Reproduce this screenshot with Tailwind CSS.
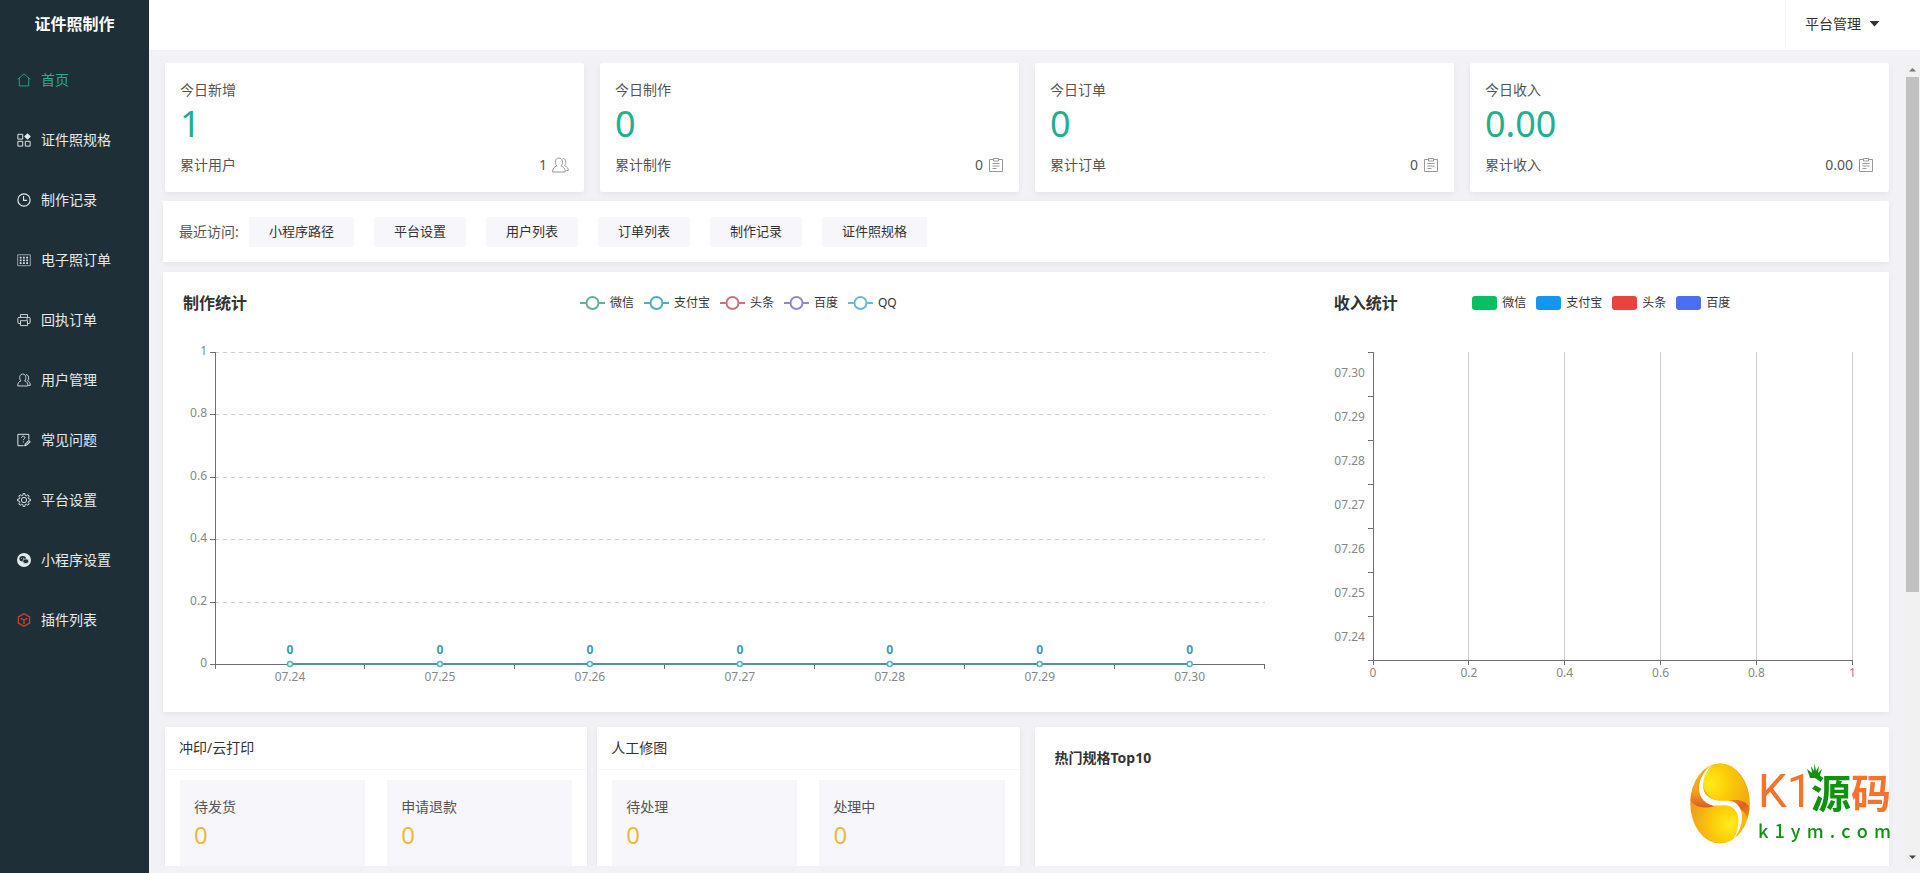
<!DOCTYPE html>
<html lang="zh-CN">
<head>
<meta charset="utf-8">
<title>证件照制作</title>
<script src="https://cdn.jsdelivr.net/npm/@tailwindcss/browser@4"></script>
</head>
<body class="flex h-screen overflow-hidden bg-[#f1f1f6] font-['Noto_Sans','Noto_Sans_CJK_SC',sans-serif] text-sm text-[#555]">

<aside class="w-[149px] shrink-0 bg-[#1f2f38] text-[#e4eaec]">
  <h1 class="flex h-12 items-center justify-center text-base font-bold text-white">证件照制作</h1>
  <nav class="flex flex-col pt-0.5">
    <a href="#" class="flex h-[60px] items-center gap-2.5 pl-[17px] text-[#1fb08e]">
      <svg class="size-[14px]" viewBox="0 0 16 16" fill="none" stroke="currentColor"><path d="M.7 7.2 8 1l7.3 6.2M2.6 5.8v9h10.8v-9"/></svg>首页</a>
    <a href="#" class="flex h-[60px] items-center gap-2.5 pl-[17px]">
      <svg class="size-[14px]" viewBox="0 0 16 16" fill="none" stroke="currentColor" stroke-width="1.1"><path d="M1 1.500h5.500v5.500H1zM1 9.500h5.500V15H1zM9.500 9.500H15V15H9.500z"/><path fill="currentColor" d="m12 .2 3.800 3.800L12 7.800 8.200 4z" stroke="none"/></svg>证件照规格</a>
    <a href="#" class="flex h-[60px] items-center gap-2.5 pl-[17px]">
      <svg class="size-[14px]" viewBox="0 0 16 16" fill="none" stroke="currentColor" stroke-width="1.3"><circle cx="8" cy="8" r="7"/><path d="M7.500 3.500v5h4"/></svg>制作记录</a>
    <a href="#" class="flex h-[60px] items-center gap-2.5 pl-[17px]">
      <svg class="size-[14px]" viewBox="0 0 16 16" fill="none" stroke="currentColor"><path d="M.8 2h14.400v12.500H.8z" opacity=".7"/><path stroke-width="2" stroke-dasharray="2 1.700" d="M3.200 5.200h10M3.200 8.400h10M3.200 11.600h10"/></svg>电子照订单</a>
    <a href="#" class="flex h-[60px] items-center gap-2.5 pl-[17px]">
      <svg class="size-[14px]" viewBox="0 0 16 16" fill="none" stroke="currentColor"><path d="M4 5V1.800h8V5M3.500 12H2.300A1.300 1.300 0 0 1 1 10.700V6.300A1.300 1.300 0 0 1 2.300 5h11.400A1.300 1.300 0 0 1 15 6.300v4.400a1.300 1.300 0 0 1-1.300 1.300h-1.200M4 8.800h8v5.600H4zM10.500 6.900h2"/></svg>回执订单</a>
    <a href="#" class="flex h-[60px] items-center gap-2.5 pl-[17px]">
      <svg class="size-[14px]" viewBox="0 0 16 16" fill="none" stroke="currentColor"><path d="M4.500 9C1.800 6 3 1.200 6.600 1.200S11.400 6 8.700 9c2.800.8 3.700 3 3.700 5.800H.8C.8 12 1.700 9.800 4.500 9zM10.300 1.800c3.300.5 3.900 4.700 1.700 7 2.300 1 3.200 3 3.200 5.300h-2.400"/></svg>用户管理</a>
    <a href="#" class="flex h-[60px] items-center gap-2.5 pl-[17px]">
      <svg class="size-[14px]" viewBox="0 0 16 16" fill="none" stroke="currentColor" stroke-width="1.100"><path d="M7.500 14.500H1V1.500h12.500v6M5.200 5.400c0-2.300 3.900-2.300 3.900 0 0 1.400-1.900 1.300-1.900 2.900M7.200 9.700v1.200"/><path d="m8.800 14.700.5-2.200 4.200-4 1.700 1.600-4.200 4z" fill="currentColor" fill-opacity=".5"/></svg>常见问题</a>
    <a href="#" class="flex h-[60px] items-center gap-2.5 pl-[17px]">
      <svg class="size-[14px]" viewBox="0 0 16 16" fill="none" stroke="currentColor" stroke-width="1.100"><circle cx="8" cy="8" r="3"/><path stroke-linejoin="round" d="M6.700 2.600 7 .7h2l.3 1.900 1.500.6L12.400 2 14 3.600l-1.200 1.600.6 1.500 1.900.3v2l-1.900.3-.6 1.500 1.200 1.600-1.600 1.600-1.600-1.200-1.500.6-.3 1.900H7l-.3-1.900-1.500-.6L3.600 14 2 12.400l1.200-1.600-.6-1.500L.7 9V7l1.900-.3.6-1.500L2 3.600 3.600 2l1.600 1.200z"/></svg>平台设置</a>
    <a href="#" class="flex h-[60px] items-center gap-2.5 pl-[17px]">
      <svg class="size-[14px]" viewBox="0 0 16 16"><circle cx="8" cy="8" r="8" fill="currentColor"/><ellipse cx="6.500" cy="6.600" rx="3.800" ry="3.100" fill="#1f2f38"/><ellipse cx="10" cy="9.400" rx="3.400" ry="2.700" fill="#1f2f38" stroke="currentColor" stroke-width=".8"/><circle cx="5.300" cy="6" r=".6" fill="currentColor"/><circle cx="7.600" cy="6" r=".6" fill="currentColor"/></svg>小程序设置</a>
    <a href="#" class="flex h-[60px] items-center gap-2.5 pl-[17px]">
      <svg class="size-[14px] text-[#c9452f]" viewBox="0 0 16 16" fill="none" stroke="currentColor" stroke-width="1.500"><path d="m8 .9 6.400 3.500v7.200L8 15.100l-6.400-3.500V4.400zM4 6 8 8.200 12 6M8 8.200v4.300"/></svg>插件列表</a>
  </nav>
</aside>

<div class="flex min-w-0 flex-1 flex-col">
  <header class="flex h-[50px] shrink-0 justify-end bg-white">
    <button class="flex h-12 items-center gap-2 border-l border-[#f3f3f6] pr-10 pl-[19px] text-[#333]">平台管理
      <svg class="h-[6px] w-[11px]" viewBox="0 0 11 6"><path d="M.5 0h10L5.500 5.500z" fill="#333"/></svg></button>
  </header>

  <div class="mt-[13px] mb-[7px] flex min-h-0 flex-1">
    <main class="min-w-0 flex-1 overflow-hidden pr-4 pl-[14px]">
      <section class="ml-0.5 grid grid-cols-4 gap-4">
        <div class="rounded-xs bg-white px-[15px] py-[17px] shadow-[0_2px_6px_rgba(0,0,0,0.06)]">
          <p class="leading-5">今日新增</p>
          <p class="text-4xl leading-[48px] text-[#1fb08e]">1</p>
          <div class="mt-[7px] flex items-center leading-5"><span class="flex-1">累计用户</span><span>1</span>
            <svg class="ml-[5px] h-4 w-[17px]" viewBox="0 0 17 16" fill="none" stroke="#999"><path d="M4.800 9C2.200 6 3 1 6.900 1S11.600 6 9 9c2.800.8 4.300 2.800 4.300 6H.6c0-3.200 1.400-5.200 4.200-6zM10.500 1.400c3.700.2 4.300 4.800 2 7.200 2.600.9 3.800 2.800 3.800 4.900h-2"/></svg></div>
        </div>
        <div class="rounded-xs bg-white px-[15px] py-[17px] shadow-[0_2px_6px_rgba(0,0,0,0.06)]">
          <p class="leading-5">今日制作</p>
          <p class="text-4xl leading-[48px] text-[#1fb08e]">0</p>
          <div class="mt-[7px] flex items-center leading-5"><span class="flex-1">累计制作</span><span>0</span>
            <svg class="ml-[5px] size-4" viewBox="0 0 16 16" fill="none" stroke="#999"><path d="M5 2.500H1.500v12h13v-12H11M5.500 1.500h5v2.500h-5zM4.500 6.500h7M4.500 9h7M4.500 11.500h4"/></svg></div>
        </div>
        <div class="rounded-xs bg-white px-[15px] py-[17px] shadow-[0_2px_6px_rgba(0,0,0,0.06)]">
          <p class="leading-5">今日订单</p>
          <p class="text-4xl leading-[48px] text-[#1fb08e]">0</p>
          <div class="mt-[7px] flex items-center leading-5"><span class="flex-1">累计订单</span><span>0</span>
            <svg class="ml-[5px] size-4" viewBox="0 0 16 16" fill="none" stroke="#999"><path d="M5 2.500H1.500v12h13v-12H11M5.500 1.500h5v2.500h-5zM4.500 6.500h7M4.500 9h7M4.500 11.500h4"/></svg></div>
        </div>
        <div class="rounded-xs bg-white px-[15px] py-[17px] shadow-[0_2px_6px_rgba(0,0,0,0.06)]">
          <p class="leading-5">今日收入</p>
          <p class="text-4xl leading-[48px] text-[#1fb08e]">0.00</p>
          <div class="mt-[7px] flex items-center leading-5"><span class="flex-1">累计收入</span><span>0.00</span>
            <svg class="ml-[5px] size-4" viewBox="0 0 16 16" fill="none" stroke="#999"><path d="M5 2.500H1.500v12h13v-12H11M5.500 1.500h5v2.500h-5zM4.500 6.500h7M4.500 9h7M4.500 11.500h4"/></svg></div>
        </div>
      </section>

      <section class="mt-[9px] flex h-[61px] items-center bg-white px-4 shadow-[0_2px_6px_rgba(0,0,0,0.06)]">
        <span class="w-[70px]">最近访问:</span>
        <div class="flex gap-5 text-[13px] text-[#333]">
          <button class="h-[30px] rounded-xs bg-[#f6f6fb] px-5">小程序路径</button>
          <button class="h-[30px] rounded-xs bg-[#f6f6fb] px-5">平台设置</button>
          <button class="h-[30px] rounded-xs bg-[#f6f6fb] px-5">用户列表</button>
          <button class="h-[30px] rounded-xs bg-[#f6f6fb] px-5">订单列表</button>
          <button class="h-[30px] rounded-xs bg-[#f6f6fb] px-5">制作记录</button>
          <button class="h-[30px] rounded-xs bg-[#f6f6fb] px-5">证件照规格</button>
        </div>
      </section>

      <section class="mt-[10px] grid h-[440px] grid-cols-3 bg-white pt-[19px] shadow-[0_2px_6px_rgba(0,0,0,0.06)]">
        <div class="col-span-2">
          <div class="flex h-6 items-center px-5">
            <h2 class="flex-1 text-base font-bold text-[#333]">制作统计</h2>
            <ul class="flex gap-2.5 text-xs text-[#333]">
              <li class="flex items-center gap-[5px]"><svg class="h-[14px] w-[25px] text-[#5fb494]" viewBox="0 0 25 14" fill="none" stroke="currentColor" stroke-width="2"><path d="M0 7h25"/><circle cx="12.500" cy="7" r="6" fill="#fff"/></svg>微信</li>
              <li class="flex items-center gap-[5px]"><svg class="h-[14px] w-[25px] text-[#50aebf]" viewBox="0 0 25 14" fill="none" stroke="currentColor" stroke-width="2"><path d="M0 7h25"/><circle cx="12.500" cy="7" r="6" fill="#fff"/></svg>支付宝</li>
              <li class="flex items-center gap-[5px]"><svg class="h-[14px] w-[25px] text-[#d0717a]" viewBox="0 0 25 14" fill="none" stroke="currentColor" stroke-width="2"><path d="M0 7h25"/><circle cx="12.500" cy="7" r="6" fill="#fff"/></svg>头条</li>
              <li class="flex items-center gap-[5px]"><svg class="h-[14px] w-[25px] text-[#9088cc]" viewBox="0 0 25 14" fill="none" stroke="currentColor" stroke-width="2"><path d="M0 7h25"/><circle cx="12.500" cy="7" r="6" fill="#fff"/></svg>百度</li>
              <li class="flex items-center gap-[5px]"><svg class="h-[14px] w-[25px] text-[#66bbd8]" viewBox="0 0 25 14" fill="none" stroke="currentColor" stroke-width="2"><path d="M0 7h25"/><circle cx="12.500" cy="7" r="6" fill="#fff"/></svg>QQ</li>
            </ul>
            <span class="flex-1"></span>
          </div>
          <div class="pt-[37px] pr-[49px] pl-[52px]">
            <svg id="makeChart" class="h-[312px] w-full overflow-visible text-xs" role="img" aria-label="制作统计"></svg>
          </div>
        </div>
        <div>
          <div class="flex h-6 items-center px-5">
            <h2 class="flex-1 text-base font-bold text-[#333]">收入统计</h2>
            <ul class="flex gap-2.5 text-xs text-[#333]">
              <li class="flex items-center gap-[5px]"><i class="h-[14px] w-[25px] rounded-[3px] bg-[#07c160]"></i>微信</li>
              <li class="flex items-center gap-[5px]"><i class="h-[14px] w-[25px] rounded-[3px] bg-[#1296ef]"></i>支付宝</li>
              <li class="flex items-center gap-[5px]"><i class="h-[14px] w-[25px] rounded-[3px] bg-[#e94340]"></i>头条</li>
              <li class="flex items-center gap-[5px]"><i class="h-[14px] w-[25px] rounded-[3px] bg-[#4e6ef2]"></i>百度</li>
            </ul>
            <span class="flex-1"></span>
          </div>
          <div class="pt-[37px] pr-[37px] pl-[59px]">
            <svg id="incomeChart" class="h-[308px] w-full overflow-visible text-xs" role="img" aria-label="收入统计"></svg>
          </div>
        </div>
      </section>

      <section class="mt-[15px] ml-0.5 grid grid-cols-2 gap-[15px]">
        <div class="grid grid-cols-2 gap-[10px]">
          <div class="rounded-xs bg-white shadow-[0_2px_6px_rgba(0,0,0,0.06)]">
            <h3 class="flex h-[43px] items-center border-b border-[#f8f8f9] px-[14px] text-[#333]">冲印/云打印</h3>
            <div class="grid grid-cols-2 gap-[22px] px-[15px] pt-[10px]">
              <div class="h-[110px] bg-[#f6f6fb] px-[14px] pt-[17px]"><p class="leading-5">待发货</p><p class="text-2xl leading-9 text-[#edb93c]">0</p></div>
              <div class="h-[110px] bg-[#f6f6fb] px-[14px] pt-[17px]"><p class="leading-5">申请退款</p><p class="text-2xl leading-9 text-[#edb93c]">0</p></div>
            </div>
          </div>
          <div class="rounded-xs bg-white shadow-[0_2px_6px_rgba(0,0,0,0.06)]">
            <h3 class="flex h-[43px] items-center border-b border-[#f8f8f9] px-[14px] text-[#333]">人工修图</h3>
            <div class="grid grid-cols-2 gap-[22px] px-[15px] pt-[10px]">
              <div class="h-[110px] bg-[#f6f6fb] px-[14px] pt-[17px]"><p class="leading-5">待处理</p><p class="text-2xl leading-9 text-[#edb93c]">0</p></div>
              <div class="h-[110px] bg-[#f6f6fb] px-[14px] pt-[17px]"><p class="leading-5">处理中</p><p class="text-2xl leading-9 text-[#edb93c]">0</p></div>
            </div>
          </div>
        </div>
        <div class="rounded-xs bg-white px-5 pt-[21px] shadow-[0_2px_6px_rgba(0,0,0,0.06)]">
          <h3 class="leading-5 font-bold text-[#333]">热门规格Top10</h3>
        </div>
      </section>
    </main>

    <div class="flex w-[15px] shrink-0 flex-col bg-[#f1f1f1]" aria-hidden="true">
      <svg class="h-[14px] w-full" viewBox="0 0 15 14"><path d="M4 8.500 7.500 5 11 8.500z" fill="#777"/></svg>
      <div class="mx-px h-[515px] bg-[#c1c1c1]"></div>
      <svg class="mt-auto h-[17px] w-full" viewBox="0 0 15 17"><path d="M4 6.500h7L7.500 10z" fill="#444"/></svg>
    </div>
  </div>
</div>

<div class="fixed right-[29px] bottom-[29px] flex items-end gap-[8px]">
  <svg class="h-[81px] w-[60px]" viewBox="0 0 60 81">
    <defs>
      <clipPath id="egg"><ellipse cx="30" cy="40.500" rx="29.700" ry="40"/></clipPath>
      <radialGradient id="eggTop" gradientUnits="userSpaceOnUse" cx="20" cy="20" r="40"><stop offset="0" stop-color="#ffec1a"/><stop offset=".5" stop-color="#fbcb05"/><stop offset="1" stop-color="#f5ab12"/></radialGradient>
      <radialGradient id="eggLow" gradientUnits="userSpaceOnUse" cx="40" cy="61" r="42"><stop offset="0" stop-color="#ffec1a"/><stop offset=".5" stop-color="#fac608"/><stop offset="1" stop-color="#f09a1e"/></radialGradient>
      <linearGradient id="foldL" x1="0" y1="0" x2="0" y2="1"><stop offset="0" stop-color="#f9bd10"/><stop offset=".65" stop-color="#f3a01c"/><stop offset="1" stop-color="#de5a22"/></linearGradient>
      <linearGradient id="foldR" x1="0" y1="0" x2="1" y2="1"><stop offset="0" stop-color="#f0901e"/><stop offset=".5" stop-color="#df5f22"/><stop offset="1" stop-color="#f2a51d"/></linearGradient>
    </defs>
    <g clip-path="url(#egg)">
      <path d="M0 0h60v81H0z" fill="url(#eggLow)"/>
      <path d="M20 0C8 14 10 30 28 39c12 1 16-3 24-1 5 1 7 4 8 8V0z" fill="url(#eggTop)"/>
      <path d="M38 39c9-4 18-2 22 8v26H44c10-15 8-27-6-34z" fill="#f6b414"/>
      <path d="M36 39c10-4 20-2 24 6l-1 14c-3-10-10-17-23-20z" fill="url(#foldR)"/>
      <path d="M21 0C4 14 5 34 24 43.500 14 46 4 44 0 37V0z" fill="url(#foldL)"/>
      <path d="M22 2C5 14 5 37 21 42c7 2 15-2 22 3 8 6 7 22-1 33 14-15 12-34 2-39-8-3-16 1-24-4C10 29 11 14 22 2z" fill="#fff"/>
    </g>
  </svg>
  <div class="w-[133px] pb-[2px]">
    <div class="flex h-[54px] items-center whitespace-nowrap">
      <span class="w-[53px] font-[Roboto] text-[46px] leading-[54px] text-[#f8722c]">K1</span>
      <span class="relative font-['Noto_Sans_CJK_SC'] text-[40px] leading-[54px] font-bold"><span class="text-[#0f930f]">源</span><span class="text-[#f8722c]">码</span>
        <svg class="absolute -top-px -left-1 h-4 w-[15px]" viewBox="0 0 15 16"><path d="M3 15 0 6l5 4-1-7 3 5 .5-8L9 8l3-5-1 7 4-4-3 9z" fill="#0f930f"/></svg></span>
    </div>
    <div class="flex h-6 items-center justify-between font-['Noto_Sans_CJK_SC'] text-lg leading-6 font-medium text-[#0f930f]"><span>k</span><span>1</span><span>y</span><span>m</span><span>.</span><span>c</span><span>o</span><span>m</span></div>
  </div>
</div>

<script>
const days = ['07.24', '07.25', '07.26', '07.27', '07.28', '07.29', '07.30'];
const steps = ['0', '0.2', '0.4', '0.6', '0.8', '1'];
const axis = '#6e7079';
const line = (x1, y1, x2, y2, color, extra = '') =>
  `<line x1="${x1}" y1="${y1}" x2="${x2}" y2="${y2}" stroke="${color}" shape-rendering="crispEdges" ${extra}/>`;
const text = (x, y, anchor, s, color = '#888', extra = '') =>
  `<text x="${x}" y="${y}" text-anchor="${anchor}" fill="${color}" ${extra}>${s}</text>`;

function drawMake() {
  const H = 312, values = [0, 0, 0, 0, 0, 0, 0];
  let s = '';
  steps.forEach((v, i) => {
    const y = Math.round(H - H * i / 5);
    if (i) s += line(0, y, '100%', y, '#ccc', 'stroke-dasharray="4 4"');
    s += line(-5, y, 0, y, axis) + text(-8, y + 3, 'end', v);
  });
  s += line(0, 0, 0, H, axis) + line(0, H, '100%', H, axis);
  for (let i = 0; i <= 7; i++) s += line(i * 100 / 7 + '%', H, i * 100 / 7 + '%', H + 5, axis);
  const at = i => (i + .5) * 100 / 7 + '%';
  s += line(at(0), H, at(6), H, '#4f93a3', 'stroke-width="2"');
  days.forEach((d, i) => {
    s += `<circle cx="${at(i)}" cy="${H}" r="2.5" fill="#fff" stroke="#4fb5c2" stroke-width="1.5"/>`;
    s += text(at(i), H - 10, 'middle', values[i], '#3a9bb5', 'font-weight="bold"');
    s += text(at(i), H + 17, 'middle', d);
  });
  document.getElementById('makeChart').innerHTML = s;
}

function drawIncome() {
  const H = 308;
  let s = '';
  steps.forEach((v, i) => {
    const x = i * 20 + '%';
    if (i) s += line(x, 0, x, H, '#ccc');
    s += line(x, H, x, H + 5, axis) + text(x, H + 17, 'middle', v);
  });
  s += line(0, 0, 0, H, axis) + line(0, H, '100%', H, axis);
  for (let i = 0; i <= 7; i++) s += line(-5, i * 44, 0, i * 44, axis);
  days.slice().reverse().forEach((d, i) => { s += text(-8, i * 44 + 25, 'end', d); });
  document.getElementById('incomeChart').innerHTML = s;
}
drawMake();
drawIncome();
</script>
</body>
</html>
